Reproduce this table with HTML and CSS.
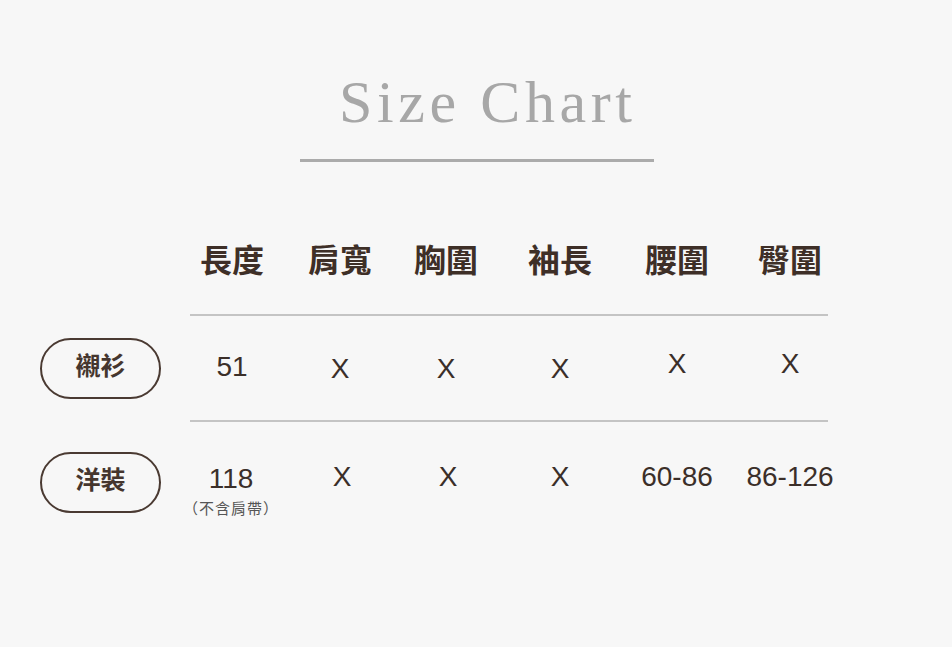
FILE: index.html
```html
<!DOCTYPE html>
<html lang="zh-Hant">
<head>
<meta charset="utf-8">
<title>Size Chart</title>
<link rel="stylesheet" href="styles.css">
</head>
<body>
<main class="page">
  <header class="title-block">
    <h1 class="title">Size Chart</h1>
    <div class="title-rule"></div>
  </header>
  <section class="chart">
    <div class="corner"></div>
    <div class="head">長度</div>
    <div class="head">肩寬</div>
    <div class="head">胸圍</div>
    <div class="head">袖長</div>
    <div class="head">腰圍</div>
    <div class="head">臀圍</div>

    <div class="rule"></div>

    <div class="label"><span class="pill">襯衫</span></div>
    <div class="val up">51</div>
    <div class="val">X</div>
    <div class="val">X</div>
    <div class="val">X</div>
    <div class="val up2">X</div>
    <div class="val up2">X</div>

    <div class="rule rule-second"></div>

    <div class="label"><span class="pill">洋裝</span></div>
    <div class="val stack"><span>118</span><small class="note">（不含肩帶）</small></div>
    <div class="val dn shift">X</div>
    <div class="val dn shift">X</div>
    <div class="val dn">X</div>
    <div class="val dn">60-86</div>
    <div class="val dn">86-126</div>
  </section>
</main>
</body>
</html>
```

FILE: styles.css
```css
html, body {
  margin: 0;
  padding: 0;
  background: #f7f7f7;
}

.page {
  width: 952px;
  height: 647px;
  overflow: hidden;
}

.title-block {
  display: flex;
  flex-direction: column;
  padding-top: 72px;
}

.title {
  margin: 0 0 0 339px;
  font-family: "Liberation Serif", "Times New Roman", serif;
  font-weight: normal;
  font-size: 60px;
  line-height: 60px;
  letter-spacing: 4.6px;
  color: #a7a7a7;
}

.title-rule {
  margin: 27px 0 0 300px;
  width: 354px;
  height: 3px;
  background: #ababab;
}

.chart {
  display: grid;
  grid-template-columns: 137px 110px 106px 106px 122px 112px 114px;
  margin: 72px 0 0 40px;
  font-family: "Liberation Sans", Arial, "Noto Sans CJK TC", sans-serif;
  color: #3b2f29;
}

.head {
  height: 50px;
  display: flex;
  align-items: center;
  justify-content: center;
  padding-bottom: 2px;
  box-sizing: border-box;
  font-family: "Noto Sans CJK TC", sans-serif;
  font-weight: 700;
  font-size: 32px;
  color: #3e2f27;
}

.rule {
  grid-column: 2 / 8;
  margin: 30px 0 22px 13px;
  width: 638px;
  height: 2px;
  background: #c4c4c4;
}

.rule-second {
  margin: 21px 0 30px 13px;
}

.label {
  display: flex;
  align-items: flex-start;
}

.pill {
  box-sizing: border-box;
  width: 121px;
  height: 61px;
  padding-bottom: 9px;
  border: 2px solid #4a3a32;
  border-radius: 31px;
  display: flex;
  align-items: center;
  justify-content: center;
  font-family: "Noto Sans CJK TC", sans-serif;
  font-weight: 700;
  font-size: 25px;
  color: #45362e;
}

.val {
  display: flex;
  align-items: center;
  justify-content: center;
  font-size: 28px;
  line-height: 1;
  padding-top: 0;
}

.val.up { padding-bottom: 4px; }
.val.up2 { padding-bottom: 9px; }
.val.dn { padding-bottom: 14px; }
.val.shift { padding-left: 4px; }

.stack {
  flex-direction: column;
  justify-content: flex-start;
  padding-top: 13px;
  margin-left: -2px;
}

.note {
  margin-top: 7px;
  font-family: "Noto Sans CJK TC", sans-serif;
  font-size: 15px;
  line-height: 1;
  letter-spacing: 1px;
  color: #555555;
}
```
